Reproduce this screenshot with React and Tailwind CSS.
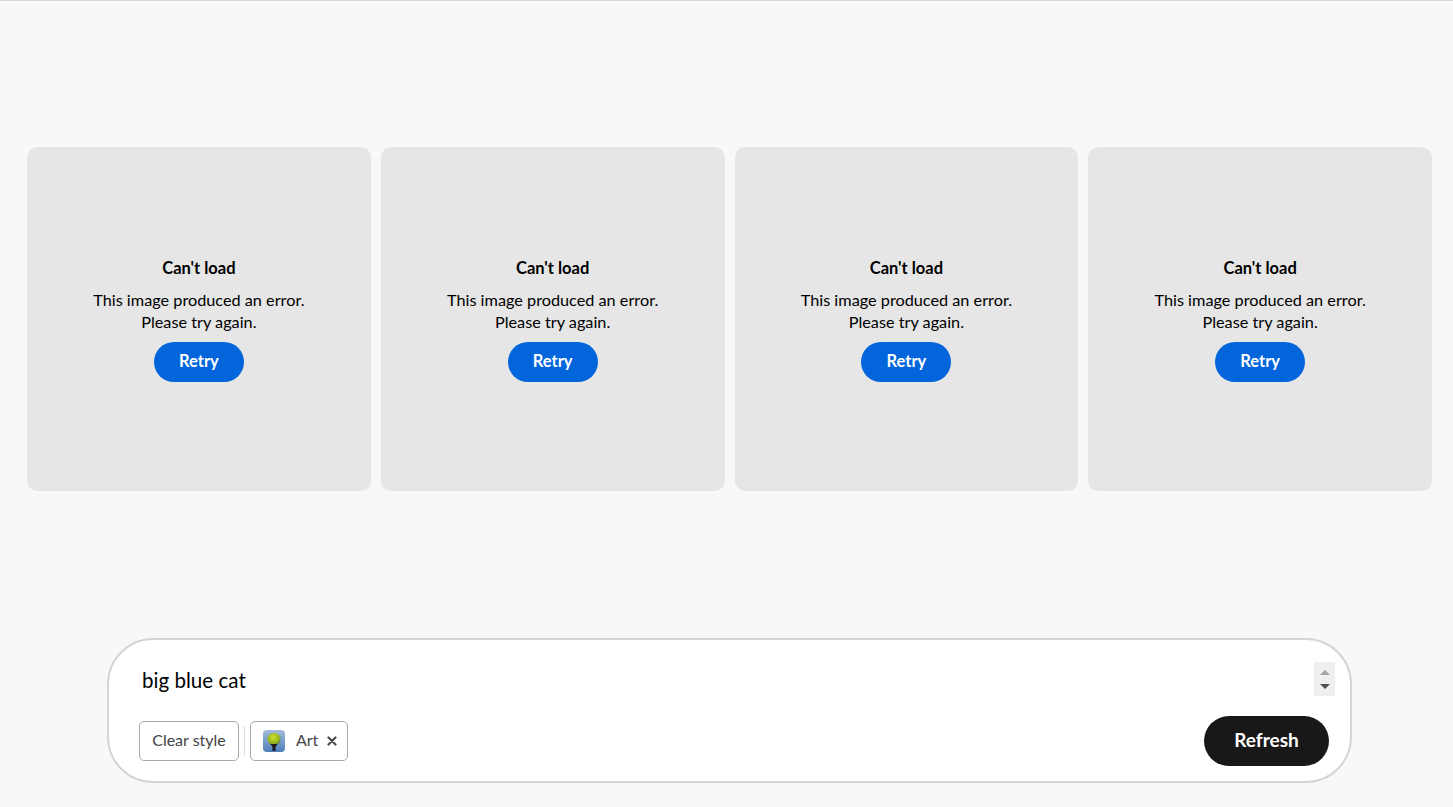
import React from 'react'

const cards = [1, 2, 3, 4]

const ErrorCard = () => {
    return (
        <div className="h-[344px] rounded-[10px] bg-[#e6e6e6] flex flex-col items-center justify-center text-[16.250px] leading-[22px] text-black">
            <div className="font-bold text-[16.500px] mb-[10px]">Can't load</div>
            <div className="text-center">This image produced an error.<br />Please try again.</div>
            <button className="mt-[9px] h-10 w-[90px] rounded-full bg-[#0265dc] text-white font-bold text-[16.500px] pb-[2px]">Retry</button>
        </div>
    )
}

const Balloon = () => {
    return (
        <svg width="22" height="22" viewBox="0 0 22 22" className="rounded-[4px]">
            <defs>
                <linearGradient id="sky" x1="0" y1="0" x2="0" y2="1">
                    <stop offset="0" stopColor="#a3bcdb" />
                    <stop offset="1" stopColor="#4f7fb8" />
                </linearGradient>
                <radialGradient id="ball" cx="0.45" cy="0.35" r="0.7">
                    <stop offset="0" stopColor="#cfe02e" />
                    <stop offset="0.7" stopColor="#8fb020" />
                    <stop offset="1" stopColor="#3f4d18" />
                </radialGradient>
            </defs>
            <rect width="22" height="22" fill="url(#sky)" />
            <path d="M11 3c3.800 0 6.500 2.700 6.500 6 0 3-2.500 4.800-4 6.500h-5C7 13.800 4.500 12 4.500 9c0-3.300 2.700-6 6.500-6z" fill="url(#ball)" />
            <path d="M7.500 14h7l-2 3v4h-3v-4z" fill="#1d1a24" />
        </svg>
    )
}

export default function App() {
    return (
        <div className="h-[807px] bg-[#f8f8f8] border-t border-[#d8d8d8] overflow-hidden font-['Lato',sans-serif]">
            <div className="grid grid-cols-4 gap-[10px] pl-[27px] pr-[21px] pt-[146px]">
                {cards.map(card => <ErrorCard key={card} />)}
            </div>

            <div className="mx-[107px] mt-[147px] w-[1245px] h-[145px] rounded-[46px] border-2 border-[#d5d5d5] bg-white pl-[30px] pr-[21px] flex flex-col">
                <div className="flex justify-between items-start pt-[21px]">
                    <div className="pl-[3px] pt-[4px] text-[20.600px] leading-[30px] text-black">big blue cat</div>
                    <div className="-mr-[6px] mt-[1px] w-[21px] h-[34px] bg-[#efefef] flex flex-col items-center justify-center gap-[9px]">
                        <div className="w-0 h-0 border-x-[5px] border-x-transparent border-b-[5px] border-b-[#a3a3a3]"></div>
                        <div className="w-0 h-0 border-x-[5px] border-x-transparent border-t-[5px] border-t-[#505050]"></div>
                    </div>
                </div>
                <div className="flex items-center justify-between mt-[20px]">
                    <div className="flex items-center">
                        <button className="h-10 w-[100px] rounded-[5px] border border-[#a8a8a8] text-[16px] text-[#444444] pb-[2px]">Clear style</button>
                        <div className="w-px h-[30px] bg-[#dddddd] mx-[5px]"></div>
                        <button className="h-10 w-[98px] rounded-[5px] border border-[#a8a8a8] text-[16px] text-[#444444] flex items-center pl-[12px]">
                            <Balloon />
                            <span className="ml-[11px] mb-[2px]">Art</span>
                            <svg width="10" height="10" viewBox="0 0 10 10" className="ml-[9px]">
                                <path d="M1.500 1.500l7 7M8.500 1.500l-7 7" stroke="#4b4b4b" strokeWidth="2.200" strokeLinecap="round" />
                            </svg>
                        </button>
                    </div>
                    <button className="h-[50px] w-[125px] rounded-full bg-[#181818] text-white font-bold text-[19px] pb-[2px]">Refresh</button>
                </div>
            </div>
        </div>
    )
}
